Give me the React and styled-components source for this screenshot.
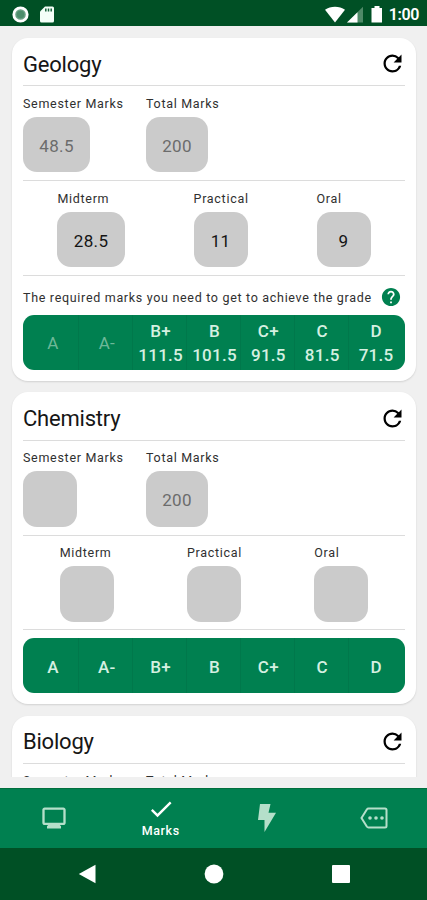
import React from 'react';
import styled, { createGlobalStyle } from 'styled-components';

const GlobalStyle = createGlobalStyle`
  * { box-sizing: border-box; }
  body { margin: 0; font-family: Roboto, "Liberation Sans", sans-serif; }
`;

const Screen = styled.div`
  display: flex;
  flex-direction: column;
  width: 427px;
  height: 900px;
  overflow: hidden;
  background: #f0f0f0;
`;

const StatusBar = styled.header`
  display: flex;
  align-items: center;
  flex: none;
  height: 26px;
  padding: 2px 8px 0 12px;
  background: #005025;
  color: #fff;
`;

const StatusGroup = styled.div`
  display: flex;
  align-items: center;
  gap: ${(p) => p.$gap}px;
`;

const Clock = styled.span`
  margin-left: 6px;
  padding-top: 1px;
  font-size: 16px;
  font-weight: 600;
  line-height: 20px;
  letter-spacing: -0.4px;
`;

const Spacer = styled.div`
  flex: 1;
`;

const Subjects = styled.main`
  display: flex;
  flex-direction: column;
  gap: 11.9px;
  flex: none;
  height: 750.5px;
  margin-bottom: 11px;
  padding: 12px 11px 0 12px;
  overflow: hidden;
`;

const Card = styled.section`
  flex: none;
  padding: 0 11px 11px;
  border-radius: 16px;
  background: #fff;
  box-shadow: 0 1px 2px rgba(0, 0, 0, 0.13);
`;

const CardHeader = styled.div`
  display: flex;
  align-items: center;
  justify-content: space-between;
  height: 47.4px;
  margin-right: -1px;
  padding-top: 4px;
`;

const Title = styled.h2`
  margin: 0;
  padding-top: 2.4px;
  font-size: 22px;
  font-weight: 400;
  line-height: 28px;
  letter-spacing: -0.22px;
  color: #161616;
`;

const Rule = styled.hr`
  height: 1px;
  margin: 0;
  border: 0;
  background: #dcdcdc;
`;

const FieldRow = styled.div`
  display: flex;
  justify-content: ${(p) => (p.$spread ? 'space-around' : 'flex-start')};
  gap: ${(p) => (p.$spread ? 0 : 22)}px;
  height: 93.8px;
  padding-top: 9.4px;
`;

const Field = styled.label`
  display: flex;
  flex-direction: column;
  align-items: flex-start;
  gap: 5px;
  width: ${(p) => (p.$width ? `${p.$width}px` : 'auto')};
`;

const FieldName = styled.span`
  font-size: 12.5px;
  line-height: 16px;
  letter-spacing: 0.7px;
  white-space: nowrap;
  color: #303030;
`;

const ValueBox = styled.span`
  display: flex;
  align-items: center;
  justify-content: center;
  width: ${(p) => p.$width}px;
  height: 55.5px;
  padding-top: 2.6px;
  border-radius: 14px;
  background: #cbcbcb;
  color: ${(p) => (p.$readOnly ? '#6c6c6c' : '#141414')};
  font-size: 17px;
  letter-spacing: 0.35px;
`;

const Hint = styled.div`
  display: flex;
  align-items: center;
  justify-content: space-between;
  height: 39.4px;
  padding: 3px 4px 0 0;
`;

const HintText = styled.span`
  font-size: 12.5px;
  letter-spacing: 0.69px;
  white-space: nowrap;
  color: #303030;
`;

const Grades = styled.div`
  display: grid;
  grid-template-columns: repeat(7, 1fr);
  height: 54.2px;
  margin-top: ${(p) => p.$top}px;
  padding: 0 2.5px;
  border-radius: 11px;
  overflow: hidden;
  background: #008050;
`;

const Grade = styled.div`
  display: flex;
  flex-direction: column;
  align-items: center;
  justify-content: center;
  padding: 2px 0 0 2px;
  border-right: 1px solid ${(p) => (p.$last ? 'transparent' : '#00784b')};
  font-size: 17px;
  font-weight: ${(p) => (p.$dim ? 400 : 500)};
  line-height: 24px;
  letter-spacing: 0.25px;
  color: ${(p) => (p.$dim ? '#6db898' : '#d5f0e1')};
`;

const TabBar = styled.nav`
  display: grid;
  grid-template-columns: repeat(4, 1fr);
  flex: none;
  height: 60.5px;
  padding-left: 1px;
  border-top: 1px solid #006f3d;
  background: #008050;
`;

const Tab = styled.div`
  display: flex;
  flex-direction: column;
  align-items: center;
  justify-content: center;
  padding-bottom: ${(p) => (p.$active ? 2 : 0)}px;
  color: ${(p) => (p.$active ? '#fff' : '#b5dfca')};
`;

const TabLabel = styled.span`
  font-size: 12.5px;
  font-weight: 500;
  line-height: 16px;
  letter-spacing: 0.6px;
`;

const SystemBar = styled.footer`
  display: grid;
  grid-template-columns: repeat(3, 127px);
  justify-content: center;
  align-items: center;
  justify-items: center;
  flex: none;
  height: 52px;
  background: #005025;
  color: #fff;
`;

const Icon = ({ size = 24, d }) => (
  <svg width={size} height={size} viewBox="0 0 24 24" fill="currentColor">
    <path d={d} />
  </svg>
);

const icons = {
  refresh:
    'M17.65 6.35A7.958 7.958 0 0 0 12 4c-4.42 0-7.99 3.58-7.99 8s3.57 8 7.99 8c3.73 0 6.84-2.55 7.73-6h-2.08A5.99 5.99 0 0 1 12 18c-3.31 0-6-2.69-6-6s2.69-6 6-6c1.66 0 3.14.69 4.22 1.78L13 11h7V4l-2.35 2.35z',
  help: 'M12 2C6.48 2 2 6.48 2 12s4.48 10 10 10 10-4.48 10-10S17.52 2 12 2zm1 17h-2v-2h2v2zm2.07-7.75-.9.92C13.45 12.9 13 13.5 13 15h-2v-.5c0-1.1.45-2.1 1.17-2.83l1.24-1.26c.37-.36.59-.86.59-1.41 0-1.1-.9-2-2-2s-2 .9-2 2H8c0-2.21 1.79-4 4-4s4 1.79 4 4c0 .88-.36 1.68-.93 2.25z',
  check: 'M9 16.17 4.83 12l-1.42 1.41L9 19 21 7l-1.41-1.41z',
  monitor:
    'M20 3H4c-1.1 0-2 .9-2 2v11c0 1.1.9 2 2 2h3l-1 1v2h12v-2l-1-1h3c1.1 0 2-.9 2-2V5c0-1.1-.9-2-2-2zm0 13H4V5h16v11z',
};

const initialSubjects = [
  {
    name: 'Geology',
    semester: '48.5',
    total: '200',
    parts: [['Midterm', '28.5'], ['Practical', '11'], ['Oral', '9']],
    needed: [null, null, '111.5', '101.5', '91.5', '81.5', '71.5'],
  },
  {
    name: 'Chemistry',
    semester: '',
    total: '200',
    parts: [['Midterm', ''], ['Practical', ''], ['Oral', '']],
  },
  {
    name: 'Biology',
    semester: '',
    total: '200',
    parts: [['Midterm', ''], ['Practical', ''], ['Oral', '']],
  },
];

const gradeNames = ['A', 'A-', 'B+', 'B', 'C+', 'C', 'D'];

const boxWidth = (value) => {
  if (value.length === 4) return 67.2;
  if (value.length === 3) return 62;
  return 54;
};

const Subject = ({ name, semester, total, parts, needed }) => (
  <Card>
    <CardHeader>
      <Title>{name}</Title>
      <Icon d={icons.refresh} size={27} />
    </CardHeader>
    <Rule />
    <FieldRow>
      <Field $width={101}>
        <FieldName>Semester Marks</FieldName>
        <ValueBox $readOnly $width={boxWidth(semester)}>{semester}</ValueBox>
      </Field>
      <Field>
        <FieldName>Total Marks</FieldName>
        <ValueBox $readOnly $width={boxWidth(total)}>{total}</ValueBox>
      </Field>
    </FieldRow>
    <Rule />
    <FieldRow $spread>
      {parts.map(([label, value]) => (
        <Field key={label} $width={boxWidth(value)}>
          <FieldName>{label}</FieldName>
          <ValueBox $width={boxWidth(value)}>{value}</ValueBox>
        </Field>
      ))}
    </FieldRow>
    <Rule />
    {needed && (
      <Hint>
        <HintText>The required marks you need to get to achieve the grade</HintText>
        <svg width="20" height="20" viewBox="1 1 22 22" fill="#008050">
          <path d={icons.help} />
        </svg>
      </Hint>
    )}
    <Grades $top={needed ? 0 : 8}>
      {gradeNames.map((grade, i) => (
        <Grade key={grade} $dim={needed && !needed[i]} $last={i === 6}>
          <span>{grade}</span>
          {needed && needed[i] && <span>{needed[i]}</span>}
        </Grade>
      ))}
    </Grades>
  </Card>
);

export default function App() {
  return (
    <>
      <GlobalStyle />
      <Screen>
        <StatusBar>
          <StatusGroup $gap={10.5}>
            <svg width="17" height="17" viewBox="0 0 17 17">
              <circle cx="8.5" cy="8.5" r="6.7" fill="#6aa184" stroke="#fff" strokeWidth="2.8" />
              <circle cx="8.5" cy="8.5" r="3.8" fill="#4c8d6b" />
            </svg>
            <svg width="14" height="17" viewBox="0 0 14 17">
              <path d="M5 .5h7.5Q14 .5 14 2v13q0 1.5-1.5 1.5h-11Q0 16.500 0 15V5.500z" fill="#f4fff8" />
              <path d="M5.800 2.500v3M8.500 2.500v3M11.200 2.500v3" stroke="#17633b" strokeWidth="1.500" />
            </svg>
          </StatusGroup>
          <Spacer />
          <StatusGroup $gap={2}>
            <svg width="20" height="17" viewBox="0 0 20 17">
              <path d="M0 3.800C5.500-.3 14.500-.3 20 3.800L10 16.500z" fill="#fff" />
            </svg>
            <svg width="16" height="17" viewBox="0 0 16 17">
              <path d="M16 .8v15.700H0z" fill="#4f8a68" />
              <path d="M10.500 6.200v10.300H0z" fill="#fff" />
            </svg>
            <svg width="18" height="17" viewBox="0 0 18 17">
              <path d="M9.500 0h5v2H17v14.500H6.500V2h3z" fill="#fff" />
            </svg>
          </StatusGroup>
          <Clock>1:00</Clock>
        </StatusBar>

        <Subjects>
          {initialSubjects.map((s) => (
            <Subject key={s.name} {...s} />
          ))}
        </Subjects>

        <TabBar>
          <Tab>
            <Icon d={icons.monitor} size={28} />
          </Tab>
          <Tab $active>
            <Icon d={icons.check} size={28} />
            <TabLabel>Marks</TabLabel>
          </Tab>
          <Tab>
            <svg width="18" height="28" viewBox="0 0 18 28" fill="currentColor">
              <path d="M2 0h10.500L10.500 8.700H18L6.500 28V16H0z" />
            </svg>
          </Tab>
          <Tab>
            <svg width="28" height="22" viewBox="0 0 28 22" fill="none">
              <path
                d="M8.500 1.500H25Q26.500 1.500 26.500 3v16q0 1.500-1.500 1.500H8.500Q7.500 20.500 6.800 19.500L1.500 11 6.800 2.500Q7.500 1.500 8.500 1.500z"
                stroke="currentColor"
                strokeWidth="2"
              />
              <circle cx="10" cy="11" r="1.800" fill="currentColor" />
              <circle cx="16" cy="11" r="1.800" fill="currentColor" />
              <circle cx="22" cy="11" r="1.800" fill="currentColor" />
            </svg>
          </Tab>
        </TabBar>

        <SystemBar>
          <svg width="18" height="20" viewBox="0 0 18 20" fill="currentColor">
            <path d="M17.500 .8v18.400L.8 10z" />
          </svg>
          <svg width="20" height="20" viewBox="0 0 20 20" fill="currentColor">
            <circle cx="10" cy="10" r="9.400" />
          </svg>
          <svg width="18" height="18" viewBox="0 0 18 18" fill="currentColor">
            <rect width="18" height="18" rx="1" />
          </svg>
        </SystemBar>
      </Screen>
    </>
  );
}
